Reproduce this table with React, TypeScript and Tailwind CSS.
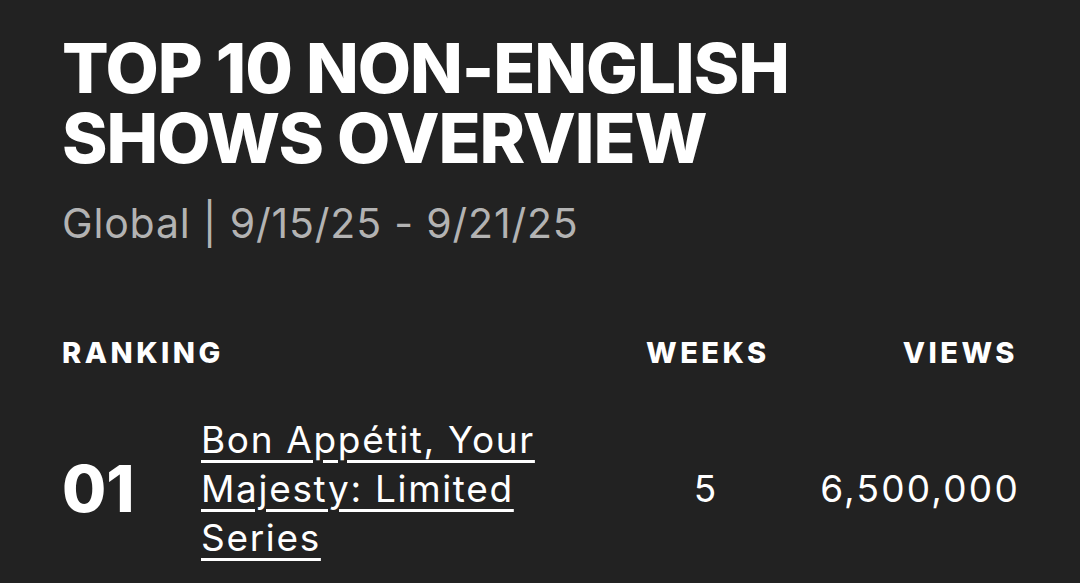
export default function App() {
  const rows = [
    {
      rank: "01",
      title: "Bon Appétit, Your Majesty: Limited Series",
      weeks: 5,
      views: "6,500,000",
    },
  ];

  return (
    <div className="min-h-screen w-full bg-[#222222] text-white font-['Inter',sans-serif] px-[62px] pt-[33px] overflow-hidden">
      {/* Heading */}
      <h1 className="text-[69px] leading-[70px] font-extrabold uppercase tracking-[-0.015em]">
        Top 10 Non-English
        <br />
        Shows Overview
      </h1>
      <p className="mt-[26px] text-[41px] leading-[48px] tracking-[0.02em] text-[#b3b3b3]">
        Global | 9/15/25 - 9/21/25
      </p>

      {/* Table */}
      <div className="mt-[89px] grid grid-cols-[139px_1fr_120px_252px]">
        <div className="col-span-2 text-[29px] font-extrabold tracking-[0.12em] leading-[34px]">
          RANKING
        </div>
        <div className="text-center text-[29px] font-extrabold tracking-[0.12em] leading-[34px]">
          WEEKS
        </div>
        <div className="text-right text-[29px] font-extrabold tracking-[0.12em] leading-[34px]">
          VIEWS
        </div>

        {rows.map((r) => (
          <div key={r.rank} className="contents">
            <div className="mt-[45px] flex items-center text-[64px] font-extrabold">
              {r.rank}
            </div>
            <div className="mt-[45px] flex items-center">
              <a
                href="#"
                className="max-w-[360px] text-[37px] leading-[49px] tracking-[0.045em] underline underline-offset-[7px] decoration-[3px]"
              >
                {r.title}
              </a>
            </div>
            <div className="mt-[45px] flex items-center justify-center text-[37px] tracking-[0.06em]">
              {r.weeks}
            </div>
            <div className="mt-[45px] flex items-center justify-end text-[37px] tracking-[0.06em] -mr-[2px]">
              {r.views}
            </div>
          </div>
        ))}
      </div>
    </div>
  );
}
